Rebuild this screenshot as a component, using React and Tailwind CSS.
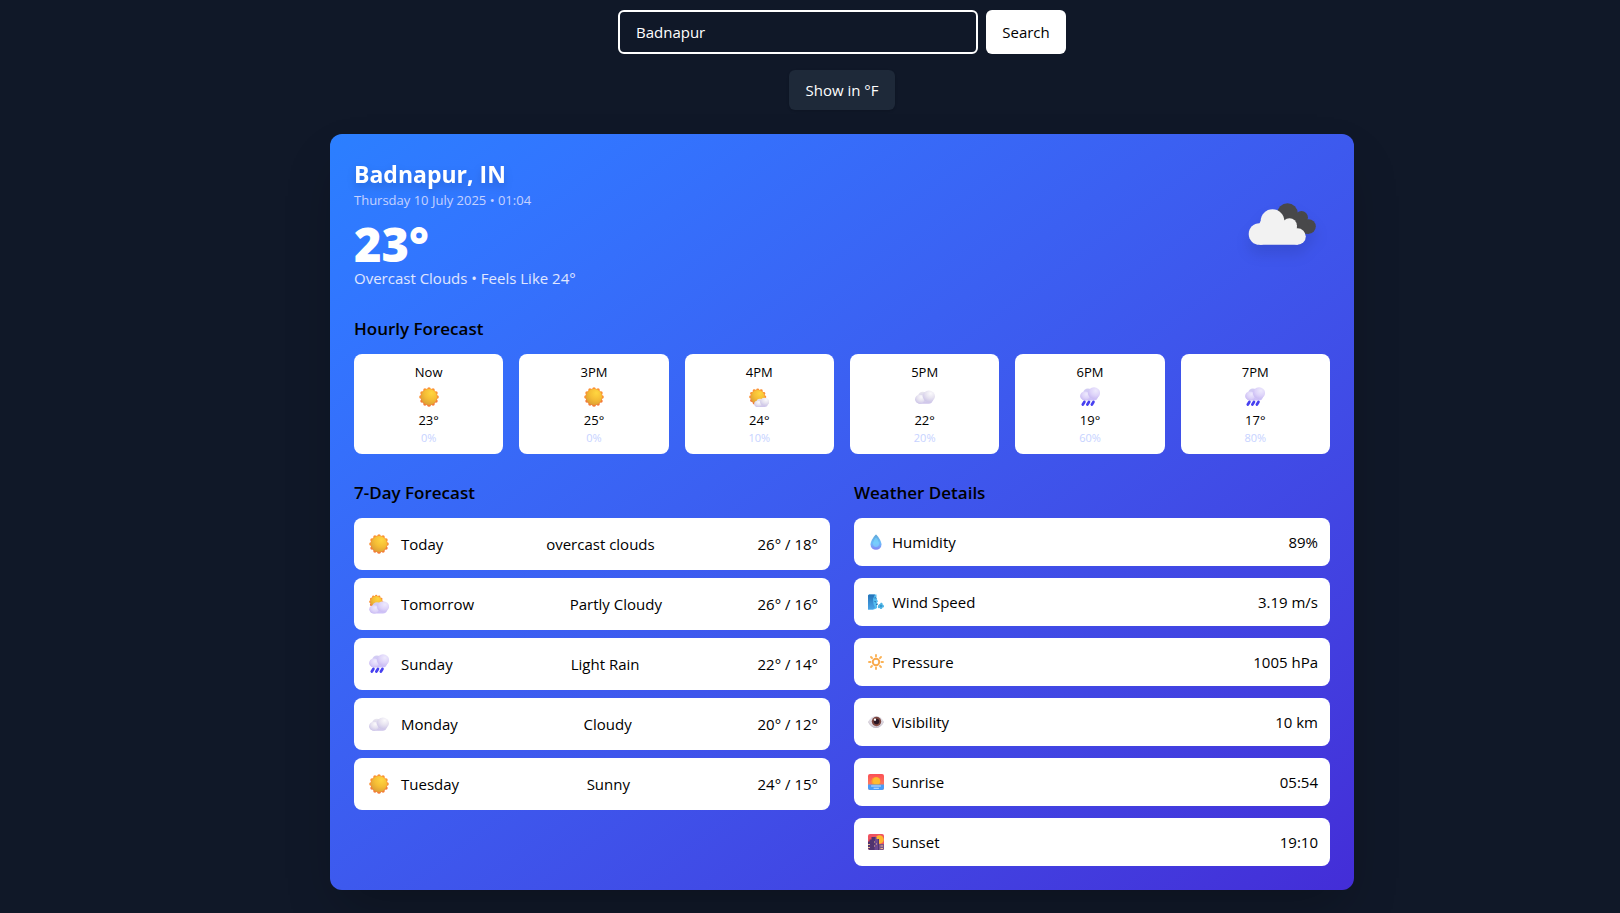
import { useState } from "react";

const BUMPS = Array.from({ length: 12 }, (_, i) => {
  const a = (i * Math.PI) / 6;
  return [16 + 13 * Math.sin(a), 16 - 13 * Math.cos(a)];
});

function Gradients() {
  return (
    <svg className="absolute size-0" aria-hidden="true">
      <defs>
        <linearGradient id="sunRim" x1="0.7" y1="0" x2="0.3" y2="1">
          <stop offset="0" stopColor="#ff9a2e" />
          <stop offset="1" stopColor="#f0703c" />
        </linearGradient>
        <radialGradient id="sunCore" cx="0.65" cy="0.25" r="0.85">
          <stop offset="0" stopColor="#ffd640" />
          <stop offset="0.5" stopColor="#f5bd35" />
          <stop offset="1" stopColor="#d89a35" />
        </radialGradient>
        <radialGradient id="cloudPuff" cx="0.65" cy="0.25" r="0.85">
          <stop offset="0" stopColor="#fbfafc" />
          <stop offset="0.5" stopColor="#e6e2f0" />
          <stop offset="1" stopColor="#c9c1e6" />
        </radialGradient>
        <linearGradient id="cloudBase" x1="0" y1="0" x2="0" y2="1">
          <stop offset="0" stopColor="#e9e7ee" />
          <stop offset="1" stopColor="#cdc3ea" />
        </linearGradient>
        <radialGradient id="lilacPuff" cx="0.65" cy="0.3" r="0.8">
          <stop offset="0" stopColor="#eeeafd" />
          <stop offset="0.55" stopColor="#ddd3f9" />
          <stop offset="1" stopColor="#c6b7f2" />
        </radialGradient>
        <linearGradient id="lilacBase" x1="0" y1="0" x2="0" y2="1">
          <stop offset="0" stopColor="#d3cef2" />
          <stop offset="1" stopColor="#cdbff8" />
        </linearGradient>
        <linearGradient id="drop" x1="0" y1="0" x2="0" y2="1">
          <stop offset="0" stopColor="#5fa6d8" />
          <stop offset="0.55" stopColor="#6dbdfa" />
          <stop offset="1" stopColor="#8583f4" />
        </linearGradient>
        <linearGradient id="windPanel" x1="0" y1="0" x2="0" y2="1">
          <stop offset="0" stopColor="#2573b8" />
          <stop offset="1" stopColor="#4aa4e8" />
        </linearGradient>
        <linearGradient id="dawnSky" x1="0" y1="0" x2="0" y2="1">
          <stop offset="0" stopColor="#fb4f55" />
          <stop offset="1" stopColor="#fd9160" />
        </linearGradient>
        <radialGradient id="eyeWhite" cx="0.5" cy="0.4" r="0.6">
          <stop offset="0" stopColor="#f6f0f6" />
          <stop offset="0.7" stopColor="#dcd7e0" />
          <stop offset="1" stopColor="#b7afbd" />
        </radialGradient>
      </defs>
    </svg>
  );
}

function SunShape() {
  return (
    <>
      <circle cx="16" cy="16" r="13.6" fill="url(#sunRim)" />
      {BUMPS.map(([x, y], i) => (
        <circle key={i} cx={x} cy={y} r="2.7" fill={y > 17 ? "#f47b38" : "#fb9133"} />
      ))}
      <circle cx="16" cy="16" r="12.8" fill="url(#sunCore)" />
    </>
  );
}

function CloudShape({ lilac }) {
  const base = lilac ? "url(#lilacBase)" : "url(#cloudBase)";
  const puff = lilac ? "url(#lilacPuff)" : "url(#cloudPuff)";
  return (
    <>
      <rect x="2" y="13" width="27" height="14" rx="7" fill={base} />
      <circle cx="13" cy="14" r="7" fill={base} />
      <circle cx="8.5" cy="19.5" r="7.5" fill={puff} />
      <circle cx="22.5" cy="14.5" r="9.5" fill={puff} />
    </>
  );
}

function Icon({ name, className }) {
  return (
    <svg viewBox="0 0 32 32" className={className} aria-hidden="true">
      {name === "sun" && <SunShape />}
      {name === "sunSmallCloud" && (
        <>
          <g transform="translate(0 2) scale(.87)">
            <SunShape />
          </g>
          <g transform="translate(7.5 14) scale(.78 .66)">
            <CloudShape />
          </g>
        </>
      )}
      {name === "sunCloud" && (
        <>
          <g transform="translate(0 1) scale(.72)">
            <SunShape />
          </g>
          <g transform="translate(-.7 7) scale(1.03 .9)">
            <CloudShape lilac />
          </g>
        </>
      )}
      {name === "cloud" && (
        <g transform="translate(-1 1) scale(1.03 .95)">
          <CloudShape />
        </g>
      )}
      {name === "rain" && (
        <>
          <g transform="translate(-.8 -4.2) scale(1.03 .95)">
            <CloudShape lilac />
          </g>
          <g stroke="#4740f0" strokeWidth="4.400" strokeLinecap="round">
            <path d="M7 24 4.500 28M14.300 24l-2.500 4M21.500 24l-2.500 4" />
          </g>
        </>
      )}
      {name === "drop" && (
        <>
          <path d="M16 1C15 1 5 13 5 21a11 10.500 0 0 0 22 0C27 13 17 1 16 1Z" fill="url(#drop)" />
          <path d="M16 7c3 3 6 9 6 13 0 4-3 6-6 6s-6-2-6-6c0-4 3-10 6-13Z" fill="#7fdcff" opacity=".55" />
        </>
      )}
      {name === "wind" && (
        <>
          <path d="M2 1h15v8l3 6-2 2v11c-3 3-8 3-8 3H0V3Z" fill="#54bdf0" />
          <path d="M2 1h12L10 10l1 10 3 7-4 4H0V3Z" fill="url(#windPanel)" />
          <path d="M13 8c2-1 3 0 4 1M13 15l3 1M16 21l4-1" stroke="#2269ad" strokeWidth="2" fill="none" />
          <path d="M20 24c1-4 5-3 5-6 3-2 5 1 4 3 4 1 4 6 0 6-1 4-5 4-6 1-3 1-4-1-3-4Z" fill="#4cb3e4" />
          <circle cx="26" cy="24" r="2" fill="#2d8fcb" />
        </>
      )}
      {name === "brightness" && (
        <g fill="none" stroke="#fbb255" strokeWidth="3.800" strokeLinecap="round">
          <circle cx="16" cy="16" r="6.500" stroke="#f9a94c" />
          <path d="M16 2v3M16 27v3M2 16h3M27 16h3M6 6l2 2M24 24l2 2M26 6l-2 2M8 24l-2 2" />
        </g>
      )}
      {name === "eye" && (
        <>
          <path d="M0 16C4 8 10 4 16 4s12 4 16 12c-4 8-10 12-16 12S4 24 0 16Z" fill="url(#eyeWhite)" />
          <circle cx="17" cy="15" r="9.500" fill="#7b4740" />
          <circle cx="17" cy="15" r="5.500" fill="#2b1723" />
          <path d="M12 21a8 8 0 0 0 11-2c-2 5-7 6-11 2Z" fill="#b56f57" />
          <circle cx="14" cy="11.500" r="2.300" fill="#fff" />
        </>
      )}
      {name === "sunrise" && (
        <>
          <rect width="32" height="32" rx="4" fill="url(#dawnSky)" />
          <circle cx="16" cy="15" r="9" fill="#fda32c" />
          <circle cx="17" cy="14" r="7" fill="#fdbb31" />
          <path d="M0 21h32v7a4 4 0 0 1-4 4H4a4 4 0 0 1-4-4Z" fill="#4b9cf8" />
          <path d="M7 24h18M12 28.500h9" stroke="#c4e2ff" strokeWidth="2" strokeLinecap="round" />
        </>
      )}
      {name === "sunset" && (
        <>
          <rect width="32" height="32" rx="4" fill="#ef5360" />
          <circle cx="23" cy="11" r="8.500" fill="#fdb92e" />
          <path d="M0 15h3v-4h4V6h7v5h6v-1h2v10h10v8a4 4 0 0 1-4 4H4a4 4 0 0 1-4-4Z" fill="#50346f" />
          <path d="M14 6h3v4h3v22h-7Z" fill="#6a478e" />
          <path d="M22 20h10v8a4 4 0 0 1-4 4h-6Z" fill="#7c5489" />
          <path d="M0 20h4v2H0ZM0 26h4v2H0ZM12 15h2v2h-2ZM16 19h2v2h-2ZM12 23h2v2h-2ZM25 23h5v2h-5ZM25 28h5v2h-5Z" fill="#e8b58b" />
        </>
      )}
    </svg>
  );
}

function OvercastIcon() {
  return (
    <svg viewBox="0 0 96 96" className="size-24 drop-shadow-xl" role="img" aria-label="Overcast clouds">
      <g fill="#48484a">
        <circle cx="53.500" cy="37.500" r="10.300" />
        <circle cx="67.500" cy="41.500" r="6.500" />
        <circle cx="74.500" cy="50.500" r="7.300" />
        <path d="M53 37h14l8 13v7.800H60Z" />
      </g>
      <g fill="#f2f2f2">
        <circle cx="25.500" cy="58" r="10.800" />
        <circle cx="38.500" cy="45" r="11.800" />
        <circle cx="55.500" cy="49.500" r="7.300" />
        <circle cx="63.500" cy="60.500" r="8.300" />
        <path d="M26.700 45h23.600l5 4h7.500v12l1 7.800H25.500V47.200Z" />
      </g>
    </svg>
  );
}

const HOURS = [
  ["Now", "sun", 23, 0],
  ["3PM", "sun", 25, 0],
  ["4PM", "sunSmallCloud", 24, 10],
  ["5PM", "cloud", 22, 20],
  ["6PM", "rain", 19, 60],
  ["7PM", "rain", 17, 80],
];

const DAYS = [
  ["Today", "sun", "overcast clouds", 26, 18],
  ["Tomorrow", "sunCloud", "Partly Cloudy", 26, 16],
  ["Sunday", "rain", "Light Rain", 22, 14],
  ["Monday", "cloud", "Cloudy", 20, 12],
  ["Tuesday", "sun", "Sunny", 24, 15],
];

const DETAILS = [
  ["Humidity", "drop", "89%"],
  ["Wind Speed", "wind", "3.19 m/s"],
  ["Pressure", "brightness", "1005 hPa"],
  ["Visibility", "eye", "10 km"],
  ["Sunrise", "sunrise", "05:54"],
  ["Sunset", "sunset", "19:10"],
];

function SectionTitle({ children }) {
  return <h3 className="mb-[11px] pt-px text-[17px] leading-7 font-semibold">{children}</h3>;
}

export default function App() {
  const [city, setCity] = useState("Badnapur");
  const [fahrenheit, setFahrenheit] = useState(false);
  const deg = (c) => `${fahrenheit ? Math.round((c * 9) / 5 + 32) : c}°`;

  return (
    <div className="min-h-screen bg-gray-900 pt-[10px] pb-[23px] pl-16 font-['Segoe_UI','Open_Sans',sans-serif] text-[15px] leading-6 text-black">
      <Gradients />
      <main className="mx-auto flex max-w-5xl flex-col items-center">
        <form className="flex w-full max-w-md gap-2" onSubmit={(e) => e.preventDefault()}>
          <input
            aria-label="City"
            value={city}
            onChange={(e) => setCity(e.target.value)}
            className="min-w-0 flex-1 rounded-md border-2 border-white bg-transparent px-4 py-2 text-white outline-none"
          />
          <button type="submit" className="w-20 rounded-md bg-white">
            Search
          </button>
        </form>

        <button
          type="button"
          onClick={() => setFahrenheit(!fahrenheit)}
          className="mt-4 rounded-md bg-gray-800 px-4 py-2 text-white shadow-sm"
        >
          {fahrenheit ? "Show in °C" : "Show in °F"}
        </button>

        <section className="mt-6 flex w-full flex-col gap-6 rounded-xl bg-linear-to-br from-blue-500 to-indigo-700 p-6 shadow-2xl">
          <header className="flex items-center justify-between">
            <div>
              <h2 className="text-[23px] leading-8 font-bold text-white drop-shadow-lg">Badnapur, IN</h2>
              <p className="text-[13px] leading-5 text-indigo-200">Thursday 10 July 2025 • 01:04</p>
              <p className="mt-3 text-[47px] leading-[44px] font-extrabold text-white">{deg(23)}</p>
              <p className="text-indigo-100">Overcast Clouds • Feels Like {deg(24)}</p>
            </div>
            <OvercastIcon />
          </header>

          <section>
            <SectionTitle>Hourly Forecast</SectionTitle>
            <ul className="grid grid-cols-6 gap-4">
              {HOURS.map(([time, icon, temp, rain]) => (
                <li key={time} className="flex flex-col items-center rounded-lg bg-white p-2 text-[13px] leading-5">
                  <span>{time}</span>
                  <Icon name={icon} className="mt-[5px] mb-[3px] size-5" />
                  <span>{deg(temp)}</span>
                  <span className="text-[11px] leading-4 text-indigo-200">{rain}%</span>
                </li>
              ))}
            </ul>
          </section>

          <div className="grid grid-cols-2 gap-6">
            <section>
              <SectionTitle>7-Day Forecast</SectionTitle>
              <ul className="flex flex-col gap-2">
                {DAYS.map(([day, icon, text, high, low]) => (
                  <li key={day} className="flex items-center justify-between rounded-lg bg-white p-3 leading-7">
                    <span className="flex items-center gap-3 pl-[3px]">
                      <Icon name={icon} className="size-5" />
                      {day}
                    </span>
                    <span>{text}</span>
                    <span>
                      {deg(high)} / {deg(low)}
                    </span>
                  </li>
                ))}
              </ul>
            </section>
            <section>
              <SectionTitle>Weather Details</SectionTitle>
              <dl className="flex flex-col gap-3">
                {DETAILS.map(([label, icon, value]) => (
                  <div key={label} className="flex items-center justify-between rounded-lg bg-white p-3">
                    <dt className="flex items-center gap-2 pl-[2px]">
                      <Icon name={icon} className="size-4" />
                      {label}
                    </dt>
                    <dd>{value}</dd>
                  </div>
                ))}
              </dl>
            </section>
          </div>
        </section>
      </main>
    </div>
  );
}
